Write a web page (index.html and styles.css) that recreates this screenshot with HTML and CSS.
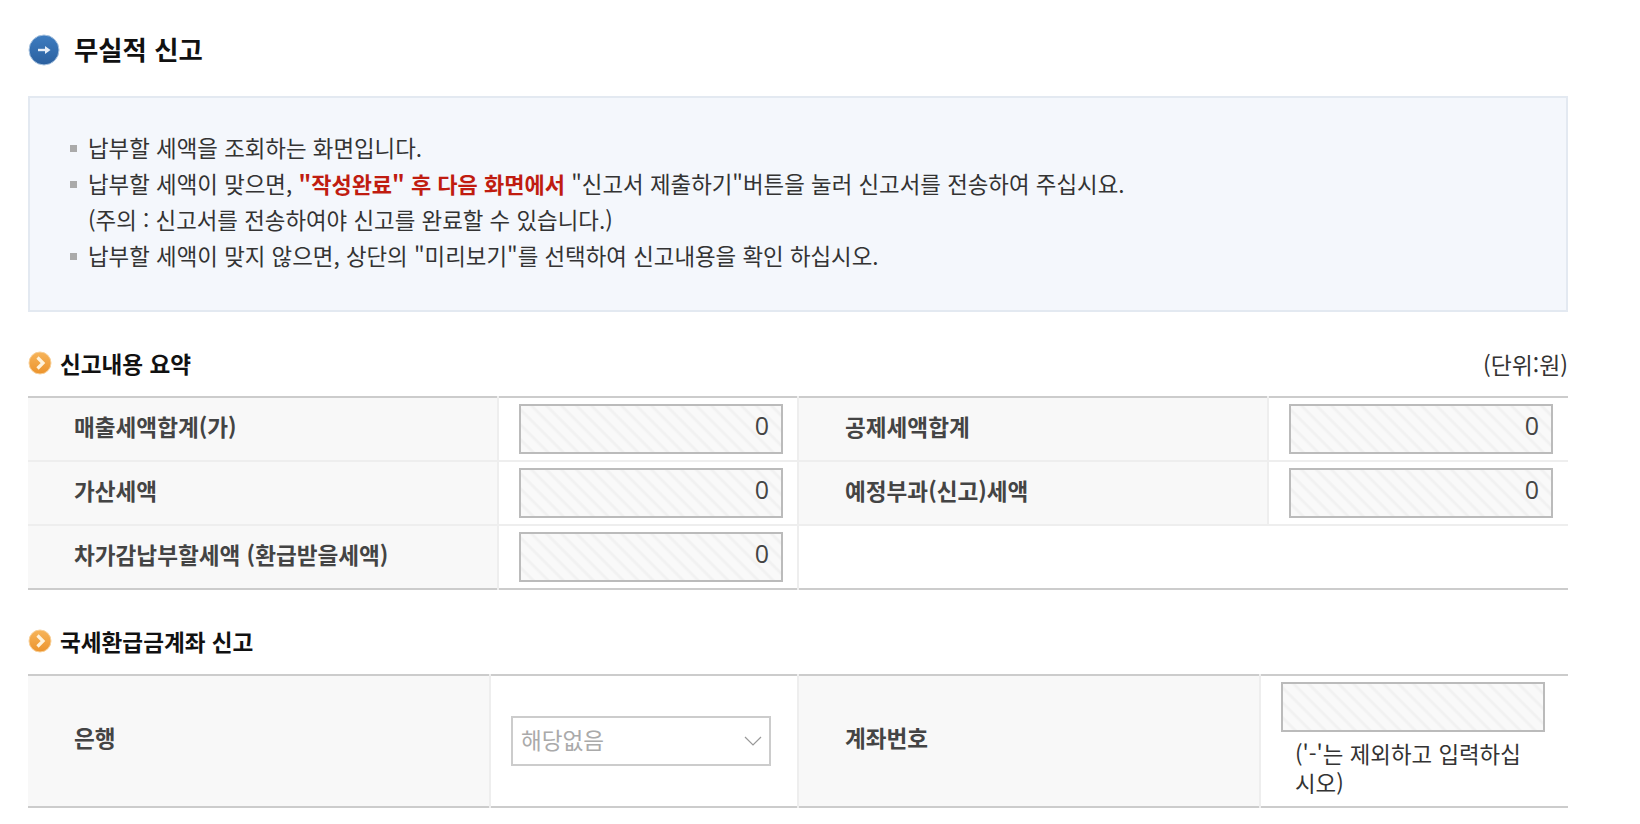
FILE: index.html
```html
<!DOCTYPE html>
<html lang="ko">
<head>
<meta charset="utf-8">
<title>무실적 신고</title>
<link rel="stylesheet" href="styles.css">
</head>
<body>
<main class="page">
  <h1 class="page-title">
    <svg class="icon-main" viewBox="0 0 32 32" aria-hidden="true"><defs><linearGradient id="g1" x1="0" y1="0" x2="0" y2="1"><stop offset="0" stop-color="#3d7cc0"/><stop offset="1" stop-color="#2b609f"/></linearGradient></defs><circle cx="16" cy="16" r="15" fill="url(#g1)" stroke="#a9c3df" stroke-width="1"/><path d="M10 16H20" stroke="#e6eef8" stroke-width="2.4" fill="none"/><path d="M17 12L22.5 16L17 20Z" fill="#e6eef8"/></svg>
    <span class="title-text">무실적 신고</span>
  </h1>
  <div class="notice">
    <ul class="notice-list">
      <li>납부할 세액을 조회하는 화면입니다.</li>
      <li>납부할 세액이 맞으면, <strong class="warn">"작성완료" 후 다음 화면에서</strong> "신고서 제출하기"버튼을 눌러 신고서를 전송하여 주십시요.<br>(주의 : 신고서를 전송하여야 신고를 완료할 수 있습니다.)</li>
      <li>납부할 세액이 맞지 않으면, 상단의 "미리보기"를 선택하여 신고내용을 확인 하십시오.</li>
    </ul>
  </div>

  <div class="section-head first">
    <h2 class="section-title">
      <svg class="icon-sub" viewBox="0 0 24 24" aria-hidden="true"><defs><linearGradient id="g2" x1="0" y1="0" x2="0" y2="1"><stop offset="0" stop-color="#f7b45a"/><stop offset="1" stop-color="#ec932c"/></linearGradient></defs><circle cx="12" cy="12" r="11" fill="url(#g2)" stroke="#f8cf97" stroke-width="1"/><path d="M9.5 6.5L15 12L9.5 17.5" stroke="#fff3dc" stroke-width="3.2" fill="none"/></svg>
      <span class="sec-text">신고내용 요약</span>
    </h2>
    <span class="unit">(단위:원)</span>
  </div>
  <table class="form-table summary">
    <colgroup><col class="c1"><col class="c2"><col class="c3"><col class="c4"></colgroup>
    <tr><th>매출세액합계(가)</th><td><div class="field">0</div></td><th>공제세액합계</th><td><div class="field">0</div></td></tr>
    <tr><th>가산세액</th><td><div class="field">0</div></td><th>예정부과(신고)세액</th><td><div class="field">0</div></td></tr>
    <tr><th>차가감납부할세액 (환급받을세액)</th><td><div class="field">0</div></td><td class="blank" colspan="2"></td></tr>
  </table>

  <div class="section-head second">
    <h2 class="section-title">
      <svg class="icon-sub" viewBox="0 0 24 24" aria-hidden="true"><circle cx="12" cy="12" r="11" fill="url(#g2)" stroke="#f8cf97" stroke-width="1"/><path d="M9.5 6.5L15 12L9.5 17.5" stroke="#fff3dc" stroke-width="3.2" fill="none"/></svg>
      <span class="sec-text">국세환급금계좌 신고</span>
    </h2>
  </div>
  <table class="form-table account">
    <colgroup><col class="a1"><col class="a2"><col class="a3"><col class="a4"></colgroup>
    <tr>
      <th>은행</th>
      <td><div class="select"><span class="select-text">해당없음</span><svg class="chev" viewBox="0 0 18 10" aria-hidden="true"><path d="M1 1L9 9L17 1" stroke="#999" stroke-width="1.2" fill="none"/></svg></div></td>
      <th>계좌번호</th>
      <td class="acct-cell"><div class="field empty"></div><p class="hint">('-'는 제외하고 입력하십시오)</p></td>
    </tr>
  </table>
</main>
</body>
</html>
```
FILE: styles.css
```css
* { box-sizing: border-box; }
html, body { margin: 0; padding: 0; background: #fff; }
body { font-family: "Noto Sans CJK KR", "Noto Sans", sans-serif; color: #333; font-size: 22.4px; }
.page { width: 1568px; padding-left: 28px; padding-top: 29px; }
.page-title { display: flex; align-items: center; margin: 0; height: 40px; font-size: 26.4px; font-weight: 700; color: #111; }
.title-text { margin-top: -2px; }
.icon-main { width: 32px; height: 32px; margin-right: 14px; flex: none; position: relative; top: 1px; filter: blur(0.4px); }
.notice { margin-top: 27px; height: 216px; background: #f4f7fc; border: 2px solid #e3e9f1; padding: 30.5px 0 0 40px; }
.notice-list { list-style: none; margin: 0; padding: 0; line-height: 36.2px; }
.notice-list li { position: relative; padding-left: 18px; }
.notice-list li::before { content: ""; position: absolute; left: 0; top: 16px; width: 7px; height: 7px; background: #aaa; }
.warn { color: #c01c10; font-weight: 700; font-size: 22px; }
.section-head { display: flex; align-items: center; justify-content: space-between; height: 40px; }
.section-head.first { margin-top: 34px; }
.section-head.second { margin-top: 34px; }
.section-title { display: flex; align-items: center; gap: 8px; margin: 0; font-size: 22.6px; font-weight: 700; color: #111; }
.sec-text { margin-top: -6px; }
.icon-sub { width: 24px; height: 24px; flex: none; position: relative; top: -3px; left: -0.5px; filter: blur(0.4px); }
.unit { font-size: 22.9px; color: #333; margin-top: -4px; }
.form-table { width: 100%; margin-top: 10px; border-collapse: collapse; table-layout: fixed; border-top: 2px solid #ccc; border-bottom: 2px solid #ccc; }
.form-table th, .form-table td { border-top: 2px solid #eee; border-left: 2px solid #eee; padding: 0; }
.form-table tr:first-child th, .form-table tr:first-child td { border-top: 0; }
.form-table th:first-child { border-left: 0; }
.form-table th { background: #f8f8f8; text-align: left; padding: 0 0 5px 46px; font-size: 22.6px; font-weight: 700; color: #444; }
.account th { padding-bottom: 7px; }
.summary tr { height: 64px; }
.c1 { width: 470px; } .c2 { width: 300px; } .c3 { width: 470px; }
.a1 { width: 462px; } .a2 { width: 308px; } .a3 { width: 462px; }
.form-table td.blank { background: #fff; }
.field { height: 50px; width: 264px; margin-left: 20px; border: 2px solid #bbb; text-align: right; padding-right: 12px; line-height: 38px; color: #444; font-family: "Open Sans", sans-serif; font-size: 25px; background: repeating-linear-gradient(45deg, #f9f9f9 0, #f9f9f9 6px, #f1f1f1 8px, #f1f1f1 9px, #f9f9f9 10.6px); }
.account tr { height: 132px; }
.select { position: relative; display: flex; align-items: center; justify-content: space-between; width: 260px; height: 50px; margin-left: 20px; border: 2px solid #ccc; padding: 0 7px 0 8px; color: #aaa; }
.select-text { margin-top: -4px; font-size: 22.6px; }
.chev { width: 18px; height: 10px; }
.acct-cell { vertical-align: top; }
.acct-cell .field { margin-top: 6px; }
.hint { margin: 7px 0 0 34px; width: 240px; line-height: 29px; color: #333; }
```
